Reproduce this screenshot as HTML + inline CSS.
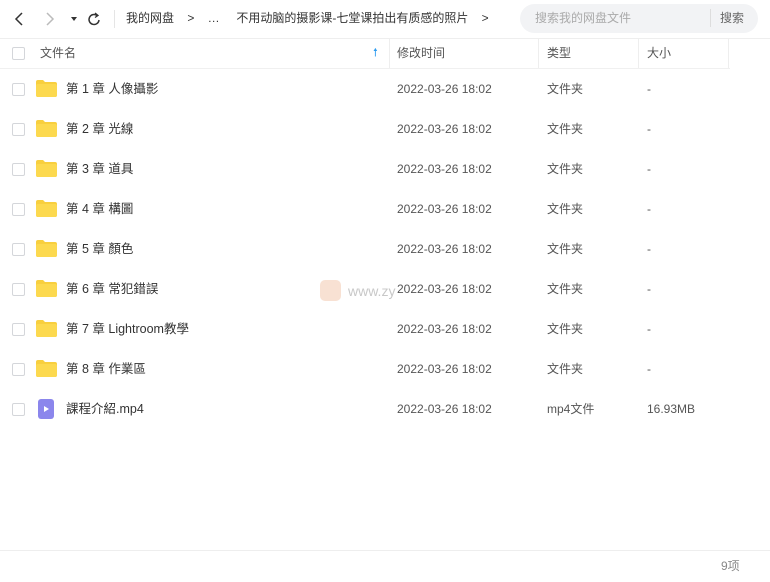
<html><head><style>
body{margin:0;width:770px;height:582px;background:#fff;font-family:"Liberation Sans","Noto Sans CJK SC",sans-serif;font-size:12px;color:#333;position:relative;overflow:hidden;line-height:16px}
.a{position:absolute;white-space:nowrap;line-height:16px}
.cb{position:absolute;left:12px;width:11px;height:11px;border:1px solid #d4d6da;border-radius:2px;background:#fff}
.g{color:#555}
</style></head><body>
<svg class="a" style="left:12px;top:10px" width="90" height="18" viewBox="0 0 90 18">
<path d="M10 3 L4 9 L10 15" fill="none" stroke="#333" stroke-width="1.5"/>
<path d="M35 3 L41 9 L35 15" fill="none" stroke="#bbb" stroke-width="1.5"/>
<path d="M59 7 L65 7 L62 11 Z" fill="#333"/>
<path d="M85 5.5 A5 5 0 1 0 87 10" fill="none" stroke="#333" stroke-width="1.5"/>
<path d="M83 3 L86 5.5 L83 7.5" fill="none" stroke="#333" stroke-width="1.3"/>
</svg>
<div class="a" style="left:114px;top:10px;width:1px;height:18px;background:#e5e5e5"></div>
<div class="a" style="left:126px;top:10px;color:#333">我的网盘 &nbsp;&nbsp; &gt; &nbsp;&nbsp; … &nbsp;&nbsp;&nbsp; 不用动脑的摄影课-七堂课拍出有质感的照片 &nbsp;&nbsp; &gt;</div>
<div class="a" style="left:520px;top:4px;width:238px;height:29px;background:#f2f3f5;border-radius:15px"></div>
<div class="a" style="left:535px;top:10px;color:#aaa">搜索我的网盘文件</div>
<div class="a" style="left:710px;top:9px;width:1px;height:18px;background:#ddd"></div>
<div class="a" style="left:720px;top:10px;color:#666">搜索</div>
<div class="a" style="left:0;top:38px;width:770px;height:1px;background:#eee"></div>
<div class="a" style="left:0;top:68px;width:730px;height:1px;background:#f0f0f0"></div>
<div class="a" style="left:389px;top:38px;width:1px;height:30px;background:#eee"></div>
<div class="a" style="left:538px;top:38px;width:1px;height:30px;background:#eee"></div>
<div class="a" style="left:638px;top:38px;width:1px;height:30px;background:#eee"></div>
<div class="a" style="left:728px;top:38px;width:1px;height:30px;background:#eee"></div>
<div class="cb" style="top:47px"></div>
<div class="a g" style="left:40px;top:45px">文件名</div>
<div class="a" style="left:373px;top:45px;color:#2d9cf0;font-size:11px">🠕</div>
<div class="a g" style="left:397px;top:45px">修改时间</div>
<div class="a g" style="left:547px;top:45px">类型</div>
<div class="a g" style="left:647px;top:45px">大小</div>

<div id="rows"></div>
<script>
var n=["第 1 章 人像攝影","第 2 章 光線","第 3 章 道具","第 4 章 構圖","第 5 章 顏色","第 6 章 常犯錯誤","第 7 章 Lightroom教學","第 8 章 作業區","課程介紹.mp4"];
var h="";
for(var i=0;i<9;i++){var y=89+i*40;var v=i==8;
h+='<div class="cb" style="top:'+(y-6)+'px"></div>';
if(v)h+='<svg class="a" style="left:38px;top:'+(y-10)+'px" width="16" height="20"><rect x="0" y="0" width="16" height="20" rx="3" fill="#8b86ec"/><path d="M6 7 L11 10 L6 13Z" fill="#fff"/></svg>';
else h+='<svg class="a" style="left:36px;top:'+(y-9)+'px" width="21" height="17"><path d="M0 2 Q0 0 2 0 L7 0 L9 2 L19 2 Q21 2 21 4 L21 15 Q21 17 19 17 L2 17 Q0 17 0 15Z" fill="#f8cf3e"/><rect x="0" y="4" width="21" height="13" rx="2" fill="#fcd94f"/></svg>';
h+='<div class="a" style="left:66px;top:'+(y-8)+'px;font-size:12.5px">'+n[i]+'</div>';
h+='<div class="a g" style="left:397px;top:'+(y-8)+'px">2022-03-26 18:02</div>';
h+='<div class="a g" style="left:547px;top:'+(y-8)+'px">'+(v?'mp4文件':'文件夹')+'</div>';
h+='<div class="a g" style="left:647px;top:'+(y-8)+'px">'+(v?'16.93MB':'-')+'</div>';}
document.getElementById("rows").innerHTML=h;
</script>
<div class="a" style="left:320px;top:280px;width:21px;height:21px;background:#f6d9c8;border-radius:5px;opacity:.8"></div>
<div class="a" style="left:348px;top:283px;color:#c8c8c8;font-size:14px">www.zy</div>
<div class="a" style="left:0;top:550px;width:770px;height:1px;background:#eee"></div>
<div class="a" style="left:721px;top:558px;color:#888">9项</div>
</body></html>
